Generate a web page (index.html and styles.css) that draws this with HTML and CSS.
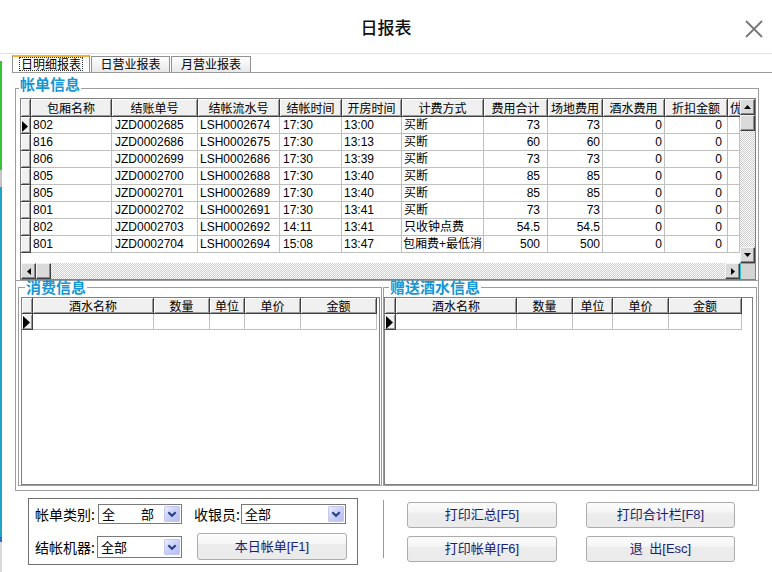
FILE: index.html
```html
<!DOCTYPE html>
<html lang="zh-CN">
<head>
<meta charset="utf-8">
<title>日报表</title>
<link rel="stylesheet" href="styles.css">
</head>
<body>
<div class="window">
  <header class="titlebar">
    <h1 class="title">日报表</h1>
    <button class="close" type="button" aria-label="关闭">
      <svg width="18" height="18" viewBox="0 0 18 18"><path d="M1 1L17 17M17 1L1 17" stroke="#777" stroke-width="1.8" fill="none"/></svg>
    </button>
  </header>
  <div class="main">
    <div class="edge"></div>
    <div class="content">
      <nav class="tabs">
        <div class="tab active"><span class="focus">日明细报表</span></div>
        <div class="tab">日营业报表</div>
        <div class="tab tab-wide">月营业报表</div>
      </nav>

      <section class="group group-top">
        <div class="group-head"><span class="seg-l seg-4"></span><span class="group-label">帐单信息</span><span class="seg-r"></span></div>
        <div class="group-body body-top">
          <div class="grid">
            <div class="grid-main">
              <div class="grid-view">
                <table class="sheet bills">
                  <colgroup>
                    <col style="width:10px"><col style="width:81px"><col style="width:86px"><col style="width:82px"><col style="width:62px"><col style="width:60px"><col style="width:82px"><col style="width:64px"><col style="width:55px"><col style="width:62px"><col style="width:63px"><col style="width:12px">
                  </colgroup>
                  <thead>
                    <tr><th></th><th>包厢名称</th><th>结账单号</th><th>结帐流水号</th><th>结帐时间</th><th>开房时间</th><th>计费方式</th><th>费用合计</th><th>场地费用</th><th>酒水费用</th><th>折扣金额</th><th class="cut">优惠金额</th></tr>
                  </thead>
                  <tbody>
                    <tr><th class="ind"><svg width="6" height="11" viewBox="0 0 6 11"><path d="M0 0L6 5.5L0 11Z"/></svg></th><td>802</td><td>JZD0002685</td><td>LSH0002674</td><td>17:30</td><td>13:00</td><td>买断</td><td class="num">73</td><td class="num">73</td><td class="num">0</td><td class="num">0</td><td></td></tr>
                    <tr><th class="ind"></th><td>816</td><td>JZD0002686</td><td>LSH0002675</td><td>17:30</td><td>13:13</td><td>买断</td><td class="num">60</td><td class="num">60</td><td class="num">0</td><td class="num">0</td><td></td></tr>
                    <tr><th class="ind"></th><td>806</td><td>JZD0002699</td><td>LSH0002686</td><td>17:30</td><td>13:39</td><td>买断</td><td class="num">73</td><td class="num">73</td><td class="num">0</td><td class="num">0</td><td></td></tr>
                    <tr><th class="ind"></th><td>805</td><td>JZD0002700</td><td>LSH0002688</td><td>17:30</td><td>13:40</td><td>买断</td><td class="num">85</td><td class="num">85</td><td class="num">0</td><td class="num">0</td><td></td></tr>
                    <tr><th class="ind"></th><td>805</td><td>JZD0002701</td><td>LSH0002689</td><td>17:30</td><td>13:40</td><td>买断</td><td class="num">85</td><td class="num">85</td><td class="num">0</td><td class="num">0</td><td></td></tr>
                    <tr><th class="ind"></th><td>801</td><td>JZD0002702</td><td>LSH0002691</td><td>17:30</td><td>13:41</td><td>买断</td><td class="num">73</td><td class="num">73</td><td class="num">0</td><td class="num">0</td><td></td></tr>
                    <tr><th class="ind"></th><td>802</td><td>JZD0002703</td><td>LSH0002692</td><td>14:11</td><td>13:41</td><td>只收钟点费</td><td class="num">54.5</td><td class="num">54.5</td><td class="num">0</td><td class="num">0</td><td></td></tr>
                    <tr><th class="ind"></th><td>801</td><td>JZD0002704</td><td>LSH0002694</td><td>15:08</td><td>13:47</td><td class="tight">包厢费+最低消</td><td class="num">500</td><td class="num">500</td><td class="num">0</td><td class="num">0</td><td></td></tr>
                  </tbody>
                </table>
              </div>
              <div class="vscroll">
                <div class="sb-btn"><svg width="7" height="4" viewBox="0 0 7 4"><path d="M3.5 0L7 4H0Z"/></svg></div>
                <div class="sb-btn"></div>
                <div class="track"></div>
                <div class="sb-btn"><svg width="7" height="4" viewBox="0 0 7 4"><path d="M0 0H7L3.5 4Z"/></svg></div>
              </div>
            </div>
            <div class="hscroll">
              <div class="sb-btn"><svg width="4" height="7" viewBox="0 0 4 7"><path d="M4 0V7L0 3.5Z"/></svg></div>
              <div class="sb-btn"></div>
              <div class="track"></div>
              <div class="sb-btn"><svg width="4" height="7" viewBox="0 0 4 7"><path d="M0 0L4 3.5L0 7Z"/></svg></div>
              <div class="corner"></div>
            </div>
          </div>
        </div>
      </section>

      <div class="lower">
        <section class="group sub sub-left">
          <div class="group-head"><span class="seg-l seg-7"></span><span class="group-label low">消费信息</span><span class="seg-r"></span></div>
          <div class="group-body body-left">
            <div class="grid grid-low">
              <table class="sheet drinks drinks-left">
                <colgroup><col style="width:11px"><col style="width:121px"><col style="width:56px"><col style="width:35px"><col style="width:56px"><col style="width:76px"></colgroup>
                <thead><tr><th></th><th>酒水名称</th><th>数量</th><th>单位</th><th>单价</th><th>金额</th></tr></thead>
                <tbody><tr><th class="ind"><svg width="7" height="13" viewBox="0 0 7 13"><path d="M0 0L7 6.5L0 13Z"/></svg></th><td></td><td></td><td></td><td></td><td></td></tr></tbody>
              </table>
            </div>
          </div>
        </section>
        <section class="group sub sub-right">
          <div class="group-head"><span class="seg-l seg-6"></span><span class="group-label low">赠送酒水信息</span><span class="seg-r"></span></div>
          <div class="group-body body-right">
            <div class="grid grid-low">
              <table class="sheet drinks drinks-right">
                <colgroup><col style="width:11px"><col style="width:121px"><col style="width:56px"><col style="width:40px"><col style="width:56px"><col style="width:73px"></colgroup>
                <thead><tr><th></th><th>酒水名称</th><th>数量</th><th>单位</th><th>单价</th><th>金额</th></tr></thead>
                <tbody><tr><th class="ind"><svg width="7" height="13" viewBox="0 0 7 13"><path d="M0 0L7 6.5L0 13Z"/></svg></th><td></td><td></td><td></td><td></td><td></td></tr></tbody>
              </table>
            </div>
          </div>
        </section>
      </div>

      <div class="controls">
        <div class="filter">
          <div class="frow">
            <span class="flabel w63">帐单类别:</span>
            <div class="combo w84" role="combobox"><span class="combo-text">全　　部</span><span class="drop"><svg width="16" height="16" viewBox="0 0 16 16"><path d="M4.3 6.3L8 9.8L11.7 6.3" stroke="#27408b" stroke-width="2.2" fill="none"/></svg></span></div>
            <span class="flabel w47 gap12">收银员:</span>
            <div class="combo w106" role="combobox"><span class="combo-text">全部</span><span class="drop"><svg width="16" height="16" viewBox="0 0 16 16"><path d="M4.3 6.3L8 9.8L11.7 6.3" stroke="#27408b" stroke-width="2.2" fill="none"/></svg></span></div>
          </div>
          <div class="frow frow2">
            <span class="flabel w62">结帐机器:</span>
            <div class="combo w85 tall" role="combobox"><span class="combo-text">全部</span><span class="drop"><svg width="16" height="16" viewBox="0 0 16 16"><path d="M4.3 6.3L8 9.8L11.7 6.3" stroke="#27408b" stroke-width="2.2" fill="none"/></svg></span></div>
            <button class="btn today" type="button">本日帐单[F1]</button>
          </div>
        </div>
        <div class="sep"></div>
        <div class="actions">
          <button class="btn" type="button">打印汇总[F5]</button>
          <button class="btn" type="button">打印合计栏[F8]</button>
          <button class="btn" type="button">打印帐单[F6]</button>
          <button class="btn" type="button">退&ensp;出[Esc]</button>
        </div>
      </div>
    </div>
  </div>
</div>
</body>
</html>
```

FILE: styles.css
```css
html, body {
  margin: 0;
  padding: 0;
  background: #fff;
}
body {
  font-family: "Liberation Sans", "Noto Sans CJK SC", sans-serif;
  color: #000;
}
.window {
  width: 772px;
  height: 572px;
  overflow: hidden;
  display: flex;
  flex-direction: column;
  background: #fff;
}

/* title bar */
.titlebar {
  flex: none;
  height: 53px;
  border-bottom: 1px solid #e3e3e3;
  display: grid;
  grid-template-columns: 1fr auto 1fr;
  align-items: center;
}
.title {
  grid-column: 2;
  margin: 0;
  padding-top: 1px;
  font: 500 17px/20px "Noto Sans CJK SC", sans-serif;
  color: #111;
}
.close {
  grid-column: 3;
  justify-self: end;
  width: 18px;
  height: 18px;
  margin: 5px 9px 0 0;
  padding: 0;
  border: 0;
  background: none;
  display: block;
}
.close svg { display: block; }

.main {
  flex: 1;
  display: flex;
  min-height: 0;
}
.edge {
  flex: none;
  width: 2px;
  background: linear-gradient(to bottom, #fff 0 7px, #35c435 7px 116px, #c4c4c4 116px 133px, #22a2c9 133px 483px, #2a6fd6 483px 488px, #d9d9d9 488px);
}
.content {
  flex: 1;
  min-width: 0;
}

/* tabs */
.tabs {
  display: flex;
  align-items: flex-end;
  height: 18px;
  margin-left: 10px;
  border-bottom: 1px solid #9a9a9a;
}
.tab {
  box-sizing: border-box;
  width: 79px;
  height: 16px;
  margin-left: 1px;
  border: 1px solid #919191;
  border-bottom: none;
  background: linear-gradient(#fefefe, #e8e8e8);
  font: 12px/14px "Noto Sans CJK SC", sans-serif;
  text-align: center;
  white-space: nowrap;
}
.tab.active {
  width: 78px;
  height: 17px;
  margin-left: 0;
  border-top: 2px solid #f1b232;
  background: #fff;
}
.tab-wide { width: 80px; }
.focus {
  display: inline-block;
  vertical-align: top;
  padding: 0 1px;
  line-height: 12px;
  border: 1px dotted #333;
}

/* group boxes */
.group-top {
  margin: 3px 13px 0 13px;
}
.group-head {
  display: flex;
  align-items: flex-start;
  height: 13px;
}
.lower .group-head { height: 7px; }
.seg-l, .seg-r {
  box-sizing: border-box;
  height: 100%;
  border-bottom: 1px solid #9c9c9c;
}
.seg-l { flex: none; }
.seg-4 { width: 4px; }
.seg-6 { width: 6px; }
.seg-7 { width: 7px; }
.seg-r { flex: 1; }
.group-label {
  flex: none;
  padding: 0 1px;
  font: 700 15px/16px "Noto Sans CJK SC", sans-serif;
  color: #1697d3;
  white-space: nowrap;
}
.group-label.low { margin-top: -2px; }
.group-body {
  border: 1px solid #9c9c9c;
  border-top: none;
}
.body-top { padding: 9px 2px 0 4px; }
.body-left { padding: 9px 1px 0 2px; }
.body-right { padding: 9px 3px 0 0; }

/* data grid */
.grid {
  border: 1px solid #808080;
  background: #fff;
}
.grid-main {
  display: flex;
  height: 164px;
}
.grid-view {
  flex: 1;
  min-width: 0;
  overflow: hidden;
}
.grid-low {
  height: 186px;
  overflow: hidden;
}
.sheet {
  table-layout: fixed;
  border-collapse: separate;
  border-spacing: 0;
  font-size: 12px;
}
.bills { width: 719px; }
.drinks-left { width: 355px; }
.drinks-right { width: 357px; }
.sheet th, .sheet td {
  padding: 0;
  overflow: hidden;
  white-space: nowrap;
}
.sheet thead th {
  line-height: 17px;
  font-family: "Noto Sans CJK SC", sans-serif;
  font-weight: normal;
  text-align: center;
  background: #f0f0f0;
  border-right: 1px solid #404040;
  border-bottom: 1px solid #404040;
  box-shadow: inset 1px 1px 0 #fff, inset -1px -1px 0 #9a9a9a;
}
.drinks thead th { line-height: 15px; }
.sheet thead th.cut {
  text-align: left;
  padding-left: 2px;
  border-right: none;
}
.sheet td {
  line-height: 16px;
  padding-left: 2px;
  border-right: 1px solid #c0c0c0;
  border-bottom: 1px solid #c0c0c0;
}
.drinks td { line-height: 17px; }
.sheet td:nth-child(3), .sheet td:nth-child(5) { padding-left: 3px; }
.sheet td.tight { padding-left: 1px; }
.sheet td.num {
  text-align: right;
  padding-left: 0;
  padding-right: 2px;
}
.bills td:nth-child(8) { padding-right: 7px; }
.bills td:nth-child(11) { padding-right: 5px; }
.sheet .ind {
  background: #f0f0f0;
  border-right: 1px solid #404040;
  border-bottom: 1px solid #404040;
  box-shadow: inset 1px 1px 0 #fff, inset -1px -1px 0 #9a9a9a;
  text-align: left;
}
.bills .ind svg { display: block; margin: 3px 0 0 1px; }
.drinks .ind svg { display: block; margin: 2px 0 0 1px; }

/* scroll bars */
.vscroll {
  flex: none;
  width: 15px;
  display: flex;
  flex-direction: column;
}
.hscroll {
  display: flex;
  height: 16px;
}
.sb-btn {
  flex: none;
  box-sizing: border-box;
  width: 15px;
  height: 16px;
  background: #dadada;
  border: 1px solid;
  border-color: #f4f4f4 #3f3f3f #3f3f3f #f4f4f4;
  box-shadow: inset -1px -1px 0 #8a8a8a;
  display: flex;
  align-items: center;
  justify-content: center;
}
.sb-btn svg { display: block; }
.track {
  flex: 1;
  background: repeating-conic-gradient(#cdcdcd 0 25%, #ffffff 0 50%) 0 0 / 2px 2px;
}
.corner {
  flex: none;
  box-sizing: border-box;
  width: 15px;
  background: #d4d4d4;
  border-top: 1px solid #2fc2d4;
  border-left: 1px solid #2fc2d4;
}

/* lower panels */
.lower {
  display: flex;
  gap: 1px;
  margin: 0 13px;
  padding: 0 1px 4px 2px;
  border: 1px solid #9c9c9c;
  border-top: none;
}
.sub-left { width: 364px; flex: none; }
.sub-right { width: 374px; flex: none; }

/* bottom controls */
.controls {
  display: flex;
  align-items: flex-start;
  margin: 7px 0 0 26px;
}
.filter {
  flex: none;
  box-sizing: border-box;
  width: 330px;
  height: 67px;
  border: 1px solid #707070;
  padding: 5px 0 0 6px;
}
.frow {
  display: flex;
  align-items: center;
  height: 20px;
}
.frow2 {
  margin-top: 9px;
  height: 27px;
}
.flabel {
  flex: none;
  font: 14px/16px "Noto Sans CJK SC", sans-serif;
  white-space: nowrap;
}
.w63 { width: 63px; }
.w62 { width: 62px; }
.w47 { width: 47px; }
.gap12 { margin-left: 12px; }
.combo {
  flex: none;
  box-sizing: border-box;
  height: 20px;
  display: flex;
  align-items: center;
  border: 1px solid #7a7a7a;
  background: #fff;
  padding-left: 3px;
}
.combo.tall { height: 22px; }
.w84 { width: 84px; }
.w85 { width: 85px; }
.w106 { width: 105px; }
.combo-text {
  flex: 1;
  font: 13px/16px "Noto Sans CJK SC", sans-serif;
  white-space: nowrap;
}
.drop {
  flex: none;
  width: 16px;
  height: 16px;
  margin-right: 1px;
  border-radius: 2px;
  background: linear-gradient(135deg, #f2f3ff 0%, #cdd2f8 45%, #b5bcf1 100%);
  box-shadow: inset 0 0 0 1px #c2c8f2;
}
.drop svg { display: block; }

.btn {
  box-sizing: border-box;
  margin: 0;
  padding: 0;
  border: 1px solid #acacac;
  border-radius: 3px;
  background: linear-gradient(#fbfbfb 0%, #f6f6f6 38%, #ececec 42%, #ebebeb 100%);
  color: #1a2373;
  font: 13px/16px "Liberation Sans", "Noto Sans CJK SC", sans-serif;
  text-align: center;
  white-space: nowrap;
}
.today {
  flex: none;
  width: 150px;
  height: 27px;
  margin-left: 15px;
}
.sep {
  flex: none;
  width: 1px;
  height: 58px;
  margin: 2px 0 0 25px;
  background: #9a9a9a;
}
.actions {
  display: grid;
  grid-template-columns: 150px 149px;
  grid-auto-rows: 26px;
  column-gap: 29px;
  row-gap: 8px;
  margin: 4px 0 0 23px;
}
```
